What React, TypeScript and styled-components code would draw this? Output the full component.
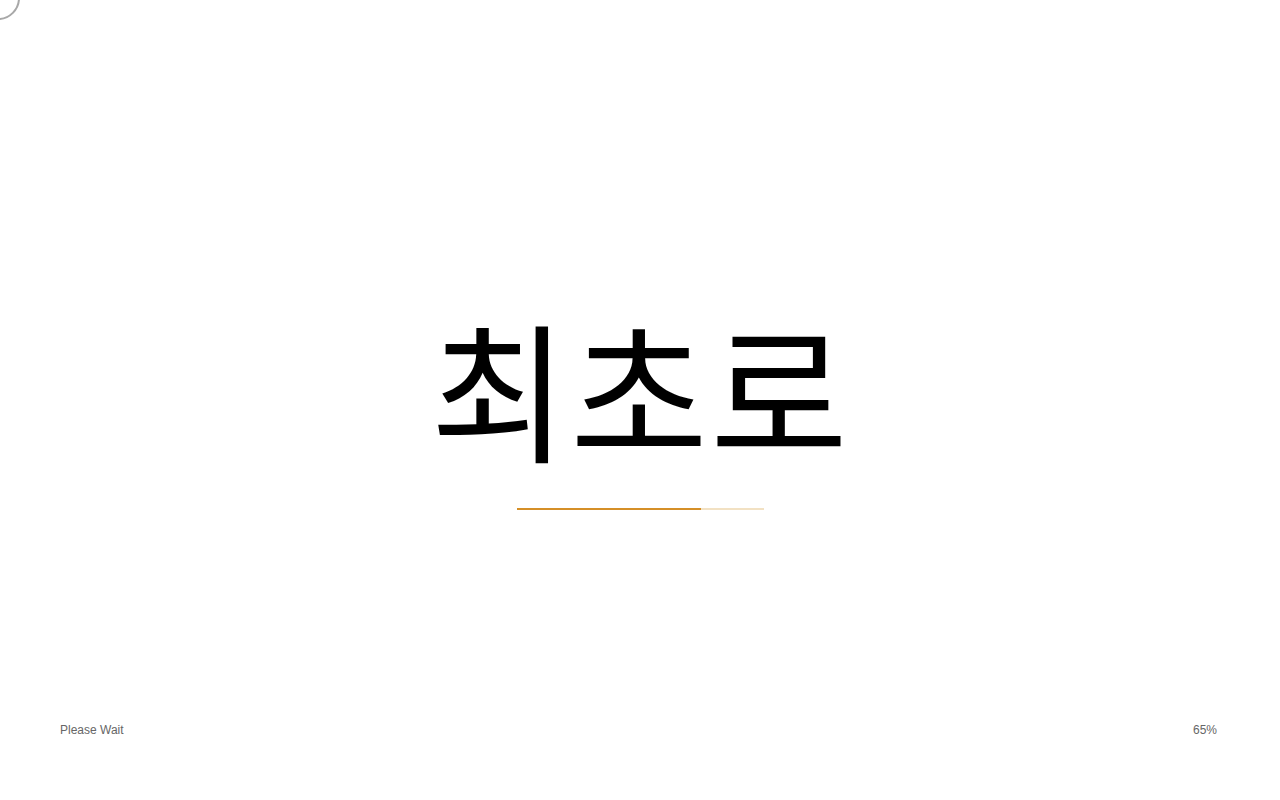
import styled, { createGlobalStyle, keyframes } from "styled-components";

const GlobalStyle = createGlobalStyle`
    html, body {
        margin: 0;
        padding: 0;
        background: #ffffff;
    }
    body {
        font-family: "Liberation Sans", Arial, sans-serif;
    }
`

const spin = keyframes`
    from { transform: rotate(0deg); }
    to { transform: rotate(360deg); }
`

export default function App() {
    const progress = 74.5
    return <Page>
        <GlobalStyle />
        <Spinner />
        <Main>
            <Title>최초로</Title>
            <Track>
                <Fill style={{ width: `${progress}%` }} />
            </Track>
        </Main>
        <Footer>
            <Status>Please Wait</Status>
            <Status>65%</Status>
        </Footer>
    </Page>
}

const Page = styled.div`
    position: relative;
    display: flex;
    flex-direction: column;
    height: 100vh;
    overflow: hidden;
`

const Spinner = styled.div`
    position: absolute;
    top: -24px;
    left: -24px;
    width: 40px;
    height: 40px;
    border: 2px solid #a8a8a8;
    border-radius: 50%;
    animation: ${spin} 1s linear infinite paused;
`

const Main = styled.main`
    flex: 1;
    display: flex;
    flex-direction: column;
    align-items: center;
    justify-content: center;
    padding-top: 97px;
`

const Title = styled.h1`
    margin: 0;
    font-family: "Noto Sans CJK KR", "Noto Sans", sans-serif;
    font-weight: 400;
    font-size: 150px;
    line-height: 150px;
    color: #000;
    letter-spacing: 2px;
`

const Track = styled.div`
    margin-top: 47px;
    width: 247px;
    height: 2px;
    background: #f2e1c3;
`

const Fill = styled.div`
    height: 100%;
    background: #d58f27;
`

const Footer = styled.footer`
    display: flex;
    justify-content: space-between;
    padding: 0 63px 63px 60px;
`

const Status = styled.span`
    font-size: 12px;
    line-height: 14px;
    color: #666666;
`
